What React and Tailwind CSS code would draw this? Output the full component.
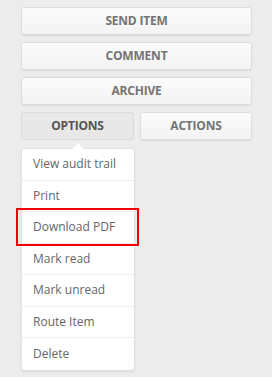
import React from 'react';

const menuItems = ['View audit trail', 'Print', 'Download PDF', 'Mark read', 'Mark unread', 'Route Item', 'Delete'];

function WideButton({ label }) {
  return (
    <button className="w-full h-[28px] flex items-center justify-center rounded-[3px] border border-[#dcdcdc] bg-gradient-to-b from-[#fbfbfb] to-[#f3f3f3] shadow-[0_1px_1px_rgba(0,0,0,0.08)] text-[12px] font-bold text-[#747474] tracking-[-0.2px]">
      {label}
    </button>
  );
}

export default function App() {
  return (
    <div className="w-[272px] h-[377px] bg-[#ececec] font-['Open_Sans',sans-serif]">
      <div className="pt-[7px] pl-[21px] w-[252px] flex flex-col gap-[7px]">
        <WideButton label="SEND ITEM" />
        <WideButton label="COMMENT" />
        <WideButton label="ARCHIVE" />
        <div className="flex gap-[6px]">
          <button className="w-[113px] h-[28px] flex items-center justify-center rounded-[3px] border border-[#dadada] bg-[#e8e8e8] text-[12px] font-bold text-[#555] tracking-[-0.2px]">
            OPTIONS
          </button>
          <button className="flex-1 h-[28px] flex items-center justify-center rounded-[3px] border border-[#dcdcdc] bg-gradient-to-b from-[#fbfbfb] to-[#f3f3f3] shadow-[0_1px_1px_rgba(0,0,0,0.08)] text-[12px] font-bold text-[#747474] tracking-[-0.2px]">
            ACTIONS
          </button>
        </div>
      </div>

      <div className="relative mt-[8px] ml-[21px] w-[114px] bg-white rounded-[4px] border border-[#e2e2e2] shadow-[0_1px_2px_rgba(0,0,0,0.08)]">
        <div className="absolute -top-[6px] left-[50px] w-0 h-0 border-l-[6px] border-r-[6px] border-b-[6px] border-l-transparent border-r-transparent border-b-white" />
        {menuItems.map((item, i) => (
          <div
            key={item}
            className={`relative h-[31.5px] flex items-center pl-[11px] text-[12px] text-[#666] ${i < menuItems.length - 1 ? 'border-b border-[#eeeeee]' : ''}`}
          >
            {item}
            {item === 'Download PDF' && (
              <div className="absolute -left-[6px] -right-[5px] -top-[4px] -bottom-[3px] border-2 border-[#f00000]" />
            )}
          </div>
        ))}
      </div>
    </div>
  );
}
